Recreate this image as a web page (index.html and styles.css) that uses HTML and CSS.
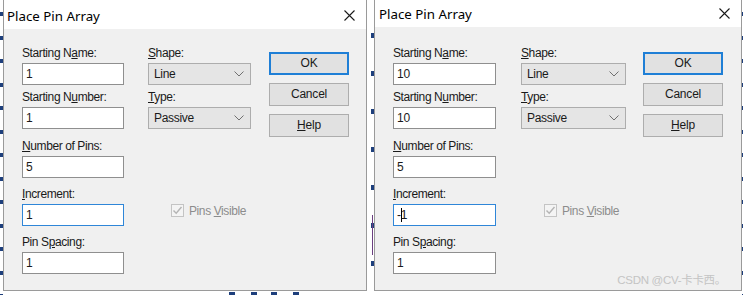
FILE: index.html
```html
<!DOCTYPE html>
<html lang="en">
<head>
  <meta charset="UTF-8">
  <title>Place Pin Array</title>
  <link rel="stylesheet" href="styles.css">
</head>
<body>
  <div class="desk">
    <div class="edge"></div>

    <!-- first dialog -->
    <div class="dialog first">
      <div class="titlebar">
        <span class="title">Place Pin Array</span>
        <svg class="close" viewBox="0 0 11 11"><path d="M0.5 0.5L10.5 10.5M10.5 0.5L0.5 10.5" stroke="#1a1a1a" stroke-width="1.1" fill="none"/></svg>
      </div>
      <div class="content">
        <div class="fields">
          <div class="field">
            <div class="label">Starting N<u>a</u>me:</div>
            <div class="input">1</div>
          </div>
          <div class="field near">
            <div class="label">Starting N<u>u</u>mber:</div>
            <div class="input">1</div>
          </div>
          <div class="field loose">
            <div class="label"><u>N</u>umber of Pins:</div>
            <div class="input">5</div>
          </div>
          <div class="field">
            <div class="label"><u>I</u>ncrement:</div>
            <div class="input focus">1</div>
          </div>
          <div class="field">
            <div class="label">Pin S<u>p</u>acing:</div>
            <div class="input">1</div>
          </div>
        </div>
        <div class="options">
          <div class="field">
            <div class="label"><u>S</u>hape:</div>
            <div class="select">Line<svg class="chev" viewBox="0 0 10 6"><path d="M0.5 0.5L5 5L9.5 0.5" stroke="#707070" fill="none"/></svg></div>
          </div>
          <div class="field near">
            <div class="label"><u>T</u>ype:</div>
            <div class="select">Passive<svg class="chev" viewBox="0 0 10 6"><path d="M0.5 0.5L5 5L9.5 0.5" stroke="#707070" fill="none"/></svg></div>
          </div>
          <div class="check">
            <span class="box"><svg viewBox="0 0 11 11"><path d="M1.5 5.5L4.2 8.3L9.5 2" stroke="#b4b4b4" stroke-width="1.4" fill="none"/></svg></span>
            <span>Pins <u>V</u>isible</span>
          </div>
        </div>
        <div class="buttons">
          <div class="btn default">OK</div>
          <div class="btn">Cancel</div>
          <div class="btn"><u>H</u>elp</div>
        </div>
      </div>
    </div>

    <div class="gap"></div>

    <!-- second dialog -->
    <div class="dialog second">
      <div class="titlebar">
        <span class="title">Place Pin Array</span>
        <svg class="close" viewBox="0 0 11 11"><path d="M0.5 0.5L10.5 10.5M10.5 0.5L0.5 10.5" stroke="#1a1a1a" stroke-width="1.1" fill="none"/></svg>
      </div>
      <div class="content">
        <div class="fields">
          <div class="field">
            <div class="label">Starting N<u>a</u>me:</div>
            <div class="input">10</div>
          </div>
          <div class="field near">
            <div class="label">Starting N<u>u</u>mber:</div>
            <div class="input">10</div>
          </div>
          <div class="field loose">
            <div class="label"><u>N</u>umber of Pins:</div>
            <div class="input">5</div>
          </div>
          <div class="field">
            <div class="label"><u>I</u>ncrement:</div>
            <div class="input focus">-<span class="caret"></span>1</div>
          </div>
          <div class="field">
            <div class="label">Pin S<u>p</u>acing:</div>
            <div class="input">1</div>
          </div>
        </div>
        <div class="options">
          <div class="field">
            <div class="label"><u>S</u>hape:</div>
            <div class="select">Line<svg class="chev" viewBox="0 0 10 6"><path d="M0.5 0.5L5 5L9.5 0.5" stroke="#707070" fill="none"/></svg></div>
          </div>
          <div class="field near">
            <div class="label"><u>T</u>ype:</div>
            <div class="select">Passive<svg class="chev" viewBox="0 0 10 6"><path d="M0.5 0.5L5 5L9.5 0.5" stroke="#707070" fill="none"/></svg></div>
          </div>
          <div class="check">
            <span class="box"><svg viewBox="0 0 11 11"><path d="M1.5 5.5L4.2 8.3L9.5 2" stroke="#b4b4b4" stroke-width="1.4" fill="none"/></svg></span>
            <span>Pins <u>V</u>isible</span>
          </div>
        </div>
        <div class="buttons">
          <div class="btn default">OK</div>
          <div class="btn">Cancel</div>
          <div class="btn"><u>H</u>elp</div>
        </div>
      </div>
      <div class="mark">CSDN @CV-卡卡西。</div>
    </div>

    <div class="edge thin"></div>
  </div>
</body>
</html>
```

FILE: styles.css
```css
* { box-sizing: border-box; }
body { margin: 0; width: 743px; height: 295px; overflow: hidden; background: #fff; font-family: "Liberation Sans", Arial, sans-serif; font-size: 12px; color: #1a1a1a; }
u { text-decoration-thickness: 1px; text-underline-offset: 1px; }

.desk { display: flex; align-items: flex-start; height: 295px;
  background:
    linear-gradient(#1e3f7c, #1e3f7c) 229px 292px / 6px 3px no-repeat,
    linear-gradient(#1e3f7c, #1e3f7c) 251px 292px / 6px 3px no-repeat,
    linear-gradient(#1e3f7c, #1e3f7c) 271px 292px / 6px 3px no-repeat,
    linear-gradient(#1e3f7c, #1e3f7c) 293px 292px / 6px 3px no-repeat,
    #fff; }
.edge { width: 3px; height: 295px; background: repeating-linear-gradient(to bottom, #fff 0 12px, #1e3f7c 12px 16px, #fff 16px 23.5px); }
.edge.thin { width: 1px; }
.gap { width: 7px; height: 295px;
  background:
    linear-gradient(#6b3f80, #6b3f80) 5px 215px / 1px 40px no-repeat,
    repeating-linear-gradient(to bottom, #fff 0 33px, #1e3f7c 33px 38px) 4px 0 / 3px 100% no-repeat,
    #fff; }

.dialog { position: relative; height: 291px; background: #f0f0f0; border: 1px solid #9a9a9a; border-top: 0; }
.dialog.first { width: 364px; }
.dialog.second { width: 368px; }

.titlebar { height: 29px; background: #fff; display: flex; align-items: center; justify-content: space-between; padding: 2px 11px 0 3px; }
.second .titlebar { height: 27px; padding: 0 11px 0 4px; }
.title { font-family: "Noto Sans", "Open Sans", sans-serif; font-size: 13.3px; color: #000; }
.close { width: 11px; height: 11px; display: block; }

.content { display: flex; padding: 17px 0 0 18px; }
.second .content { padding: 19px 0 0 18px; }

.fields { width: 102px; }
.options { width: 103px; margin-left: 24px; }
.buttons { width: 80px; margin-left: 18px; margin-top: 6px; display: flex; flex-direction: column; gap: 8px; }
.second .fields { width: 103px; }
.second .options { width: 105px; margin-left: 25px; }
.second .buttons { margin-left: 17px; }

.field + .field { margin-top: 9px; }
.field.near { margin-top: 5px; }
.field.loose { margin-top: 10px; }
.label { height: 15px; line-height: 15px; margin-bottom: 2px; letter-spacing: -0.4px; white-space: nowrap; }

.input { height: 22px; line-height: 20px; padding-left: 3px; background: #fff; border: 1px solid #8f8f8f; letter-spacing: -0.2px; }
.input.focus { border-color: #2f86d8; }
.caret { display: inline-block; width: 1px; height: 14px; background: #000; vertical-align: -3px; margin: 0 -1px 0 0; }

.select { height: 22px; line-height: 20px; padding: 0 6px 0 5px; background: #e5e5e5; border: 1px solid #adadad; display: flex; justify-content: space-between; align-items: center; letter-spacing: -0.3px; }
.chev { width: 10px; height: 6px; display: block; }

.check { display: flex; align-items: center; gap: 5px; height: 15px; margin-top: 74px; padding-left: 23px; color: #8c8c8c; letter-spacing: -0.4px; white-space: nowrap; }
.box { width: 13px; height: 13px; border: 1px solid #c4c4c4; background: #f4f4f4; display: flex; align-items: center; justify-content: center; }
.box svg { width: 11px; height: 11px; display: block; }

.btn { height: 23px; line-height: 21px; text-align: center; background: #e1e1e1; border: 1px solid #adadad; letter-spacing: -0.2px; }
.btn.default { border: 2px solid #1f7fd6; line-height: 19px; }

.mark { position: absolute; right: 15px; bottom: 2px; font-family: "Liberation Sans", "Noto Sans CJK SC", sans-serif; font-size: 11.5px; line-height: 15px; color: #c4c4c4; letter-spacing: -0.3px; }
```
